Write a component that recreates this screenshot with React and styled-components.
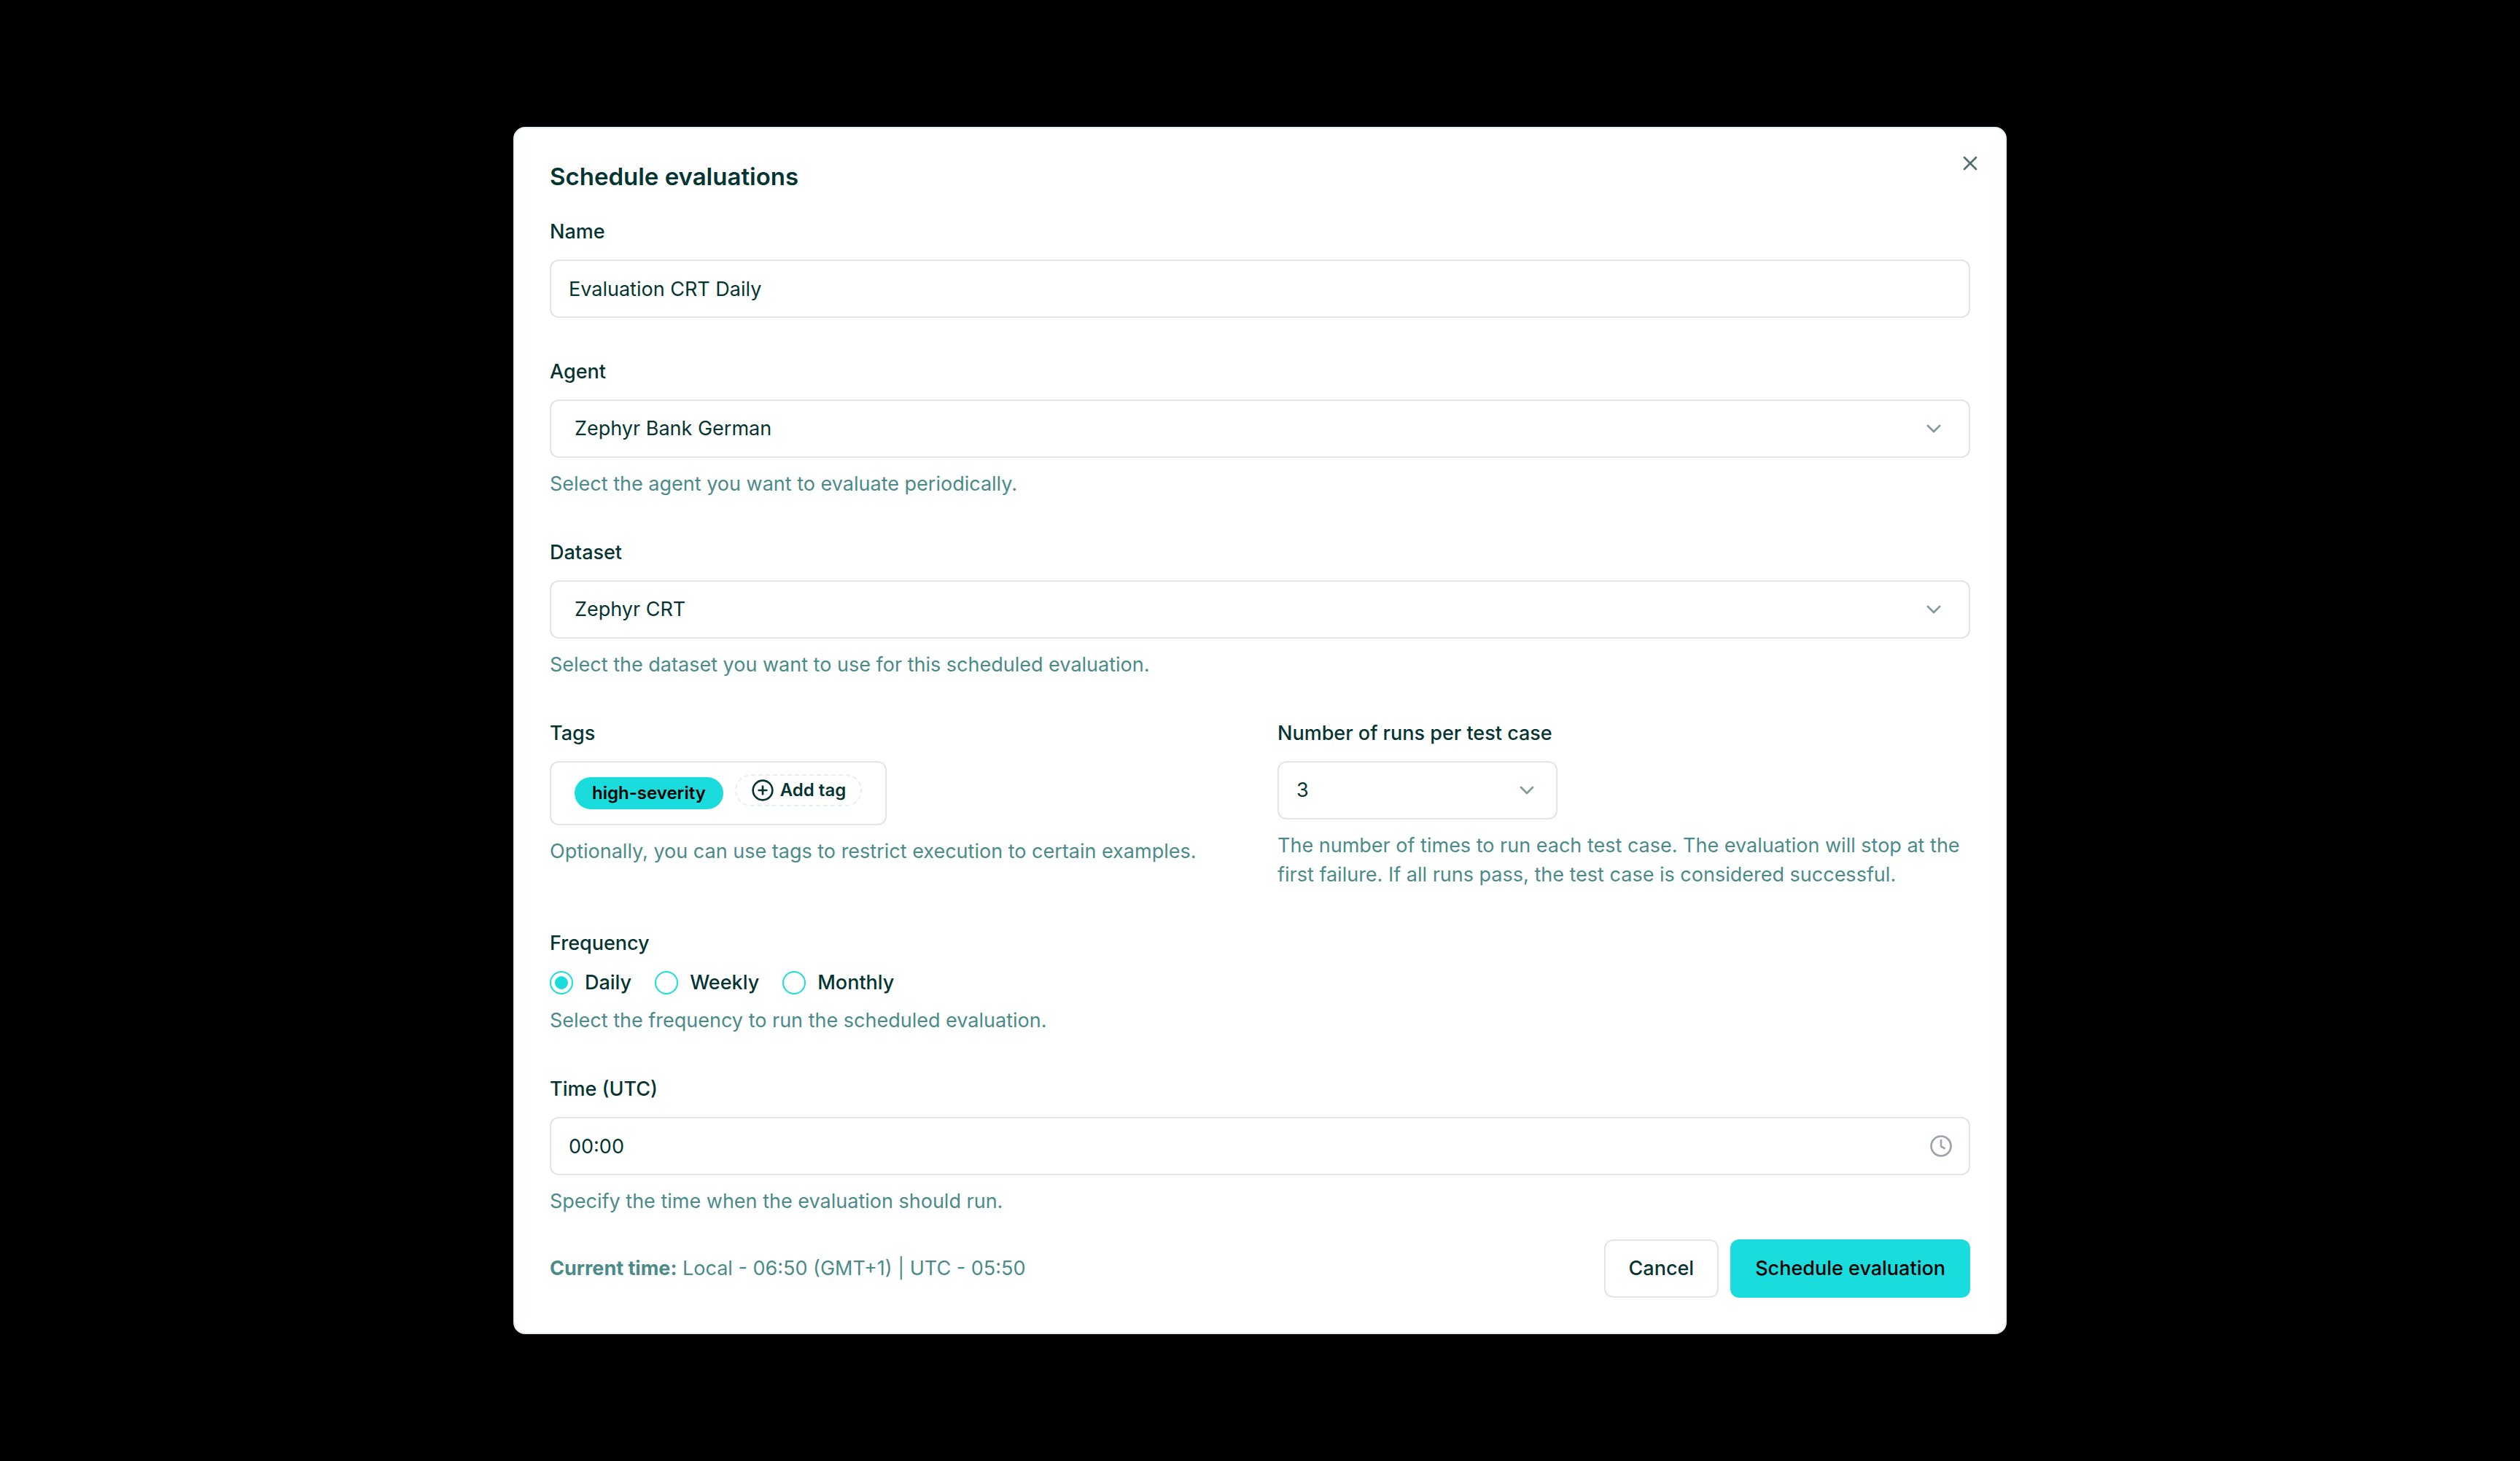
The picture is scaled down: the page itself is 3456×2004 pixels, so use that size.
import React, { useState } from 'react';
import styled, { ThemeProvider, createGlobalStyle } from 'styled-components';
import { X, ChevronDown, CirclePlus } from 'lucide-react';

const theme = {
    colors: {
        ink: '#053532',
        muted: '#4a8b89',
        accent: '#1adcdc',
        line: '#e4e4e4',
        softLine: '#e3eff0',
        clock: '#9ca3af',
    },
};

const frequencies = ['Daily', 'Weekly', 'Monthly'];

function App() {
    const [name, setName] = useState('Evaluation CRT Daily');
    const [frequency, setFrequency] = useState('Daily');
    const [time, setTime] = useState('00:00');

    return (
        <ThemeProvider theme={theme}>
            <GlobalStyle />
            <Overlay>
                <Dialog role="dialog" aria-labelledby="dialog-title">
                    <CloseButton type="button" aria-label="Close">
                        <X size={32} strokeWidth={2} />
                    </CloseButton>

                    <Title id="dialog-title">Schedule evaluations</Title>

                    <Form onSubmit={(e) => e.preventDefault()}>
                        <Field>
                            <Label htmlFor="name">Name</Label>
                            <Input id="name" value={name} onChange={(e) => setName(e.target.value)} />
                        </Field>

                        <Field>
                            <Label htmlFor="agent">Agent</Label>
                            <SelectBox $inset={32}>
                                <select id="agent" defaultValue="german">
                                    <option value="german">Zephyr Bank German</option>
                                </select>
                                <ChevronDown size={32} />
                            </SelectBox>
                            <Hint>Select the agent you want to evaluate periodically.</Hint>
                        </Field>

                        <Field>
                            <Label htmlFor="dataset">Dataset</Label>
                            <SelectBox $inset={32}>
                                <select id="dataset" defaultValue="crt">
                                    <option value="crt">Zephyr CRT</option>
                                </select>
                                <ChevronDown size={32} />
                            </SelectBox>
                            <Hint>Select the dataset you want to use for this scheduled evaluation.</Hint>
                        </Field>

                        <Columns>
                            <Field>
                                <Label as="span">Tags</Label>
                                <TagBox>
                                    <Tag>high-severity</Tag>
                                    <AddTag type="button">
                                        <CirclePlus size={32} />
                                        Add tag
                                    </AddTag>
                                </TagBox>
                                <Hint>Optionally, you can use tags to restrict execution to certain examples.</Hint>
                            </Field>

                            <Field>
                                <Label htmlFor="runs">Number of runs per test case</Label>
                                <SelectBox $inset={24} $width="384px">
                                    <select id="runs" defaultValue="3">
                                        <option value="3">3</option>
                                    </select>
                                    <ChevronDown size={32} />
                                </SelectBox>
                                <Hint>
                                    The number of times to run each test case. The evaluation will stop at the first
                                    failure. If all runs pass, the test case is considered successful.
                                </Hint>
                            </Field>
                        </Columns>

                        <Field role="radiogroup" aria-labelledby="frequency-label">
                            <Label as="span" id="frequency-label">Frequency</Label>
                            <RadioRow>
                                {frequencies.map((item) => (
                                    <RadioLabel key={item}>
                                        <Radio
                                            name="frequency"
                                            value={item}
                                            checked={frequency === item}
                                            onChange={() => setFrequency(item)}
                                        />
                                        {item}
                                    </RadioLabel>
                                ))}
                            </RadioRow>
                            <Hint>Select the frequency to run the scheduled evaluation.</Hint>
                        </Field>

                        <Field>
                            <Label htmlFor="time">Time (UTC)</Label>
                            <TimeBox>
                                <Input id="time" value={time} onChange={(e) => setTime(e.target.value)} />
                                <svg width="32" height="32" viewBox="0 0 32 32" fill="none" stroke="currentColor">
                                    <circle cx="16" cy="16" r="13.5" strokeWidth="2.7" />
                                    <path d="M16 7v9.4l5.6 3.2" strokeWidth="2.5" />
                                </svg>
                            </TimeBox>
                            <Hint>Specify the time when the evaluation should run.</Hint>
                        </Field>

                        <Footer>
                            <CurrentTime>
                                <strong>Current time:</strong> Local - 06:50 (GMT+1) | UTC - 05:50
                            </CurrentTime>
                            <Actions>
                                <Button type="button">Cancel</Button>
                                <Button type="submit" $primary>Schedule evaluation</Button>
                            </Actions>
                        </Footer>
                    </Form>
                </Dialog>
            </Overlay>
        </ThemeProvider>
    );
}

const GlobalStyle = createGlobalStyle`
  *, *::before, *::after {
    box-sizing: border-box;
  }

  body {
    margin: 0;
    background: #000;
    font-family: Inter, 'Liberation Sans', sans-serif;
    font-size: 27px;
    line-height: 40px;
    color: ${theme.colors.ink};
  }

  button, input, select {
    font: inherit;
    color: inherit;
  }
`;

const Overlay = styled.main`
    min-height: 100vh;
    display: flex;
    align-items: center;
    justify-content: center;
`;

const Dialog = styled.section`
    position: relative;
    width: 100%;
    max-width: 2048px;
    padding: 48px;
    background: #fff;
    border: 2px solid ${(props) => props.theme.colors.softLine};
    border-radius: 16px;
`;

// sits over the top right corner of the dialog
const CloseButton = styled.button`
    position: absolute;
    top: 32px;
    right: 32px;
    display: flex;
    padding: 0;
    border: 0;
    background: none;
    opacity: 0.7;
    cursor: pointer;
`;

const Title = styled.h2`
    margin: 0 0 44px;
    font-size: 33px;
    line-height: 36px;
    font-weight: 600;
`;

const Form = styled.form`
    display: flex;
    flex-direction: column;
    gap: 60px;
`;

const Field = styled.div`
    display: flex;
    flex-direction: column;
    align-items: flex-start;
`;

const Label = styled.label`
    margin-bottom: 24px;
    line-height: 28px;
    font-weight: 500;
`;

const Input = styled.input.attrs((props) => ({ type: props.type || 'text' }))`
    width: 100%;
    height: 80px;
    padding: 0 24px;
    background: #fff;
    border: 2px solid ${(props) => props.theme.colors.line};
    border-radius: 12px;
`;

const SelectBox = styled.div`
    display: grid;
    align-items: center;
    width: ${(props) => props.$width || '100%'};

    select, svg {
        grid-area: 1 / 1;
    }

    select {
        appearance: none;
        width: 100%;
        height: 80px;
        padding: 0 ${(props) => props.$inset}px;
        background: #fff;
        border: 2px solid ${(props) => props.theme.colors.line};
        border-radius: 12px;
    }

    svg {
        justify-self: end;
        margin-right: ${(props) => props.$inset + 2}px;
        opacity: 0.5;
        pointer-events: none;
    }
`;

const TimeBox = styled.div`
    display: grid;
    align-items: center;
    width: 100%;

    input, svg {
        grid-area: 1 / 1;
    }

    svg {
        justify-self: end;
        margin-right: 24px;
        color: ${(props) => props.theme.colors.clock};
        pointer-events: none;
    }
`;

const Hint = styled.p`
    margin: 16px 0 0;
    color: ${(props) => props.theme.colors.muted};
`;

const Columns = styled.div`
    display: grid;
    grid-template-columns: 1fr 1fr;
    gap: 48px;
`;

const TagBox = styled.div`
    display: flex;
    align-items: flex-start;
    gap: 16px;
    height: 88px;
    padding: 16px 32px;
    border: 2px solid ${(props) => props.theme.colors.line};
    border-radius: 12px;
`;

const Tag = styled.span`
    margin-top: 4px;
    padding: 0 24px;
    background: ${(props) => props.theme.colors.accent};
    border-radius: 22px;
    color: #000;
    font-size: 24px;
    line-height: 44px;
    font-weight: 600;
`;

const AddTag = styled.button`
    display: flex;
    align-items: center;
    gap: 8px;
    height: 44px;
    padding: 0 20px;
    background: none;
    border: 2px dashed ${(props) => props.theme.colors.softLine};
    border-radius: 22px;
    font-size: 24px;
    font-weight: 600;
    cursor: pointer;
`;

const RadioRow = styled.div`
    display: flex;
    gap: 32px;
    height: 32px;
`;

const RadioLabel = styled.label`
    display: flex;
    align-items: center;
    gap: 16px;
    font-weight: 500;
`;

const Radio = styled.input.attrs({ type: 'radio' })`
    appearance: none;
    display: grid;
    place-content: center;
    width: 32px;
    height: 32px;
    margin: 0;
    border: 2px solid ${(props) => props.theme.colors.accent};
    border-radius: 50%;

    &:checked::before {
        content: '';
        width: 18px;
        height: 18px;
        border-radius: 50%;
        background: ${(props) => props.theme.colors.accent};
    }
`;

const Footer = styled.footer`
    display: flex;
    align-items: center;
    justify-content: space-between;
    margin-top: -28px;
`;

const CurrentTime = styled.p`
    margin: 0;
    color: ${(props) => props.theme.colors.muted};
`;

const Actions = styled.div`
    display: flex;
    gap: 16px;
`;

const Button = styled.button`
    height: 80px;
    padding: 0 32px;
    background: ${(props) => (props.$primary ? props.theme.colors.accent : '#fff')};
    border: 2px solid ${(props) => (props.$primary ? props.theme.colors.accent : props.theme.colors.line)};
    border-radius: 12px;
    color: ${(props) => (props.$primary ? '#000' : props.theme.colors.ink)};
    font-weight: 500;
    cursor: pointer;
`;

export default App;
